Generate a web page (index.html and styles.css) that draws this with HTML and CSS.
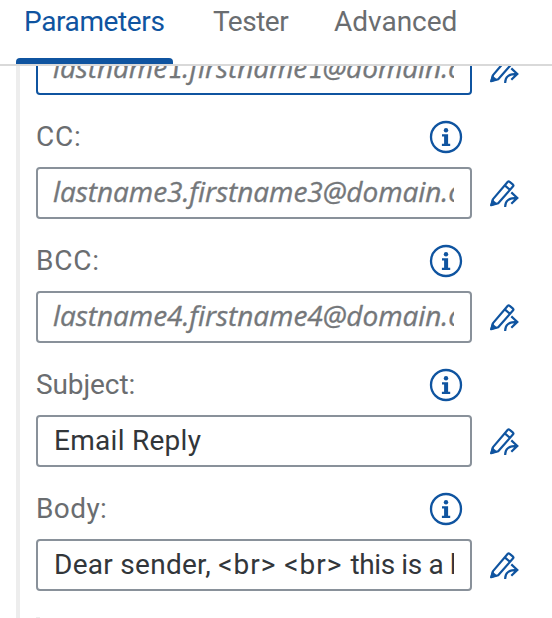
FILE: index.html
```html
<!DOCTYPE html>
<html lang="en">
<head>
<meta charset="utf-8">
<title>Parameters</title>
<link rel="stylesheet" href="styles.css">
</head>
<body>
<svg width="0" height="0" class="defs" aria-hidden="true">
  <symbol id="info" viewBox="0 0 34 34">
    <circle cx="17" cy="17" r="15" fill="none" stroke="currentColor" stroke-width="2.3"/>
    <circle cx="17" cy="10.3" r="2.2" fill="currentColor"/>
    <path d="M13 14.2h6.1v9.6h2.1v2.3h-8.3v-2.3h2.2v-7.3H13z" fill="currentColor"/>
  </symbol>
  <symbol id="edit" viewBox="0 0 30 30">
    <path d="M2.2 27.2 4 21.1 18.8 3.8q.8-.8 1.6-.1l3.6 3q.8.8.1 1.6L9.2 25.2zM15.8 7.4l5 4.3" fill="none" stroke="currentColor" stroke-width="2.2" stroke-linejoin="round"/>
    <path d="M1.1 28.3 3 21 8.7 25.9z" fill="currentColor"/>
    <path d="M16.2 29c-.2-5.9 3.2-9.1 12-9.1M22.3 14.4l6 5.5-6 5.8" fill="none" stroke="currentColor" stroke-width="2.2"/>
  </symbol>
</svg>
<nav class="tabs">
  <a class="tab active">Parameters</a>
  <a class="tab tester">Tester</a>
  <a class="tab advanced">Advanced</a>
</nav>
<main class="panel">
  <div class="form">
    <div class="row"><div class="input focused"><span class="value placeholder">lastname<span class="one">1</span>.firstname<span class="one">1</span>@domain.com</span></div><svg class="edit"><use href="#edit"/></svg></div>
    <div class="label"><span class="cc">CC:</span><svg class="info"><use href="#info"/></svg></div>
    <div class="row"><div class="input"><span class="value placeholder">lastname3.firstname3@domain.com</span></div><svg class="edit"><use href="#edit"/></svg></div>
    <div class="label"><span class="cc">BCC:</span><svg class="info"><use href="#info"/></svg></div>
    <div class="row"><div class="input"><span class="value placeholder">lastname4.firstname4@domain.com</span></div><svg class="edit"><use href="#edit"/></svg></div>
    <div class="label"><span class="subject">Subject:</span><svg class="info"><use href="#info"/></svg></div>
    <div class="row"><div class="input"><span class="value">Email Reply</span></div><svg class="edit"><use href="#edit"/></svg></div>
    <div class="label"><span class="body">Body:</span><svg class="info"><use href="#info"/></svg></div>
    <div class="row"><div class="input"><span class="value">Dear sender, <span class="markup">&lt;br&gt; &lt;br&gt; </span><span class="tight">this is a l</span></span></div><svg class="edit"><use href="#edit"/></svg></div>
    <div class="next"></div>
  </div>
</main>
</body>
</html>
```
FILE: styles.css
```css
* { box-sizing: border-box; }
body {
  margin: 0;
  height: 618px;
  overflow: hidden;
  background: #fff;
  color: #6a6d70;
  font: 28px/34px Roboto, "Liberation Sans", sans-serif;
}
.defs { display: none; }
.tabs {
  display: flex;
  height: 66px;
  padding-left: 16px;
  border-bottom: 2px solid #d9d9d9;
}
.tab { height: 64px; padding: 5px 8px 0; white-space: nowrap; }
.active {
  display: flex;
  flex-direction: column;
  justify-content: space-between;
  width: 157px;
  color: #0f54a0;
  letter-spacing: -.38px;
}
.active::after {
  content: "";
  height: 6px;
  margin: 0 -8px;
  border-radius: 4px 4px 0 0;
  background: #0f54a0;
}
.tester { margin-left: 31px; width: 90px; letter-spacing: -.5px; padding-left: 9px; }
.advanced { margin-left: 32px; }
.panel {
  height: 552px;
  margin-left: 16px;
  padding-left: 16px;
  border-left: 4px solid #ededed;
  overflow: hidden;
}
.form { margin-top: -23px; }
.row { display: flex; align-items: center; height: 52px; }
.input {
  width: 436px;
  height: 52px;
  padding: 7px 16px;
  border: 2px solid #89919a;
  border-radius: 4px;
  color: #32363a;
}
.focused { border-color: #0f54a0; }
.value {
  display: block;
  height: 38px;
  overflow: hidden;
  white-space: nowrap;
  letter-spacing: .28px;
}
.placeholder {
  margin-top: -2px;
  margin-left: -1px;
  color: #74777a;
  font-family: "Open Sans", "Noto Sans", sans-serif;
  font-style: italic;
  font-stretch: 90%;
  letter-spacing: -.06px;
  -webkit-text-stroke: .35px currentColor;
}
.one { font-family: Lato, sans-serif; letter-spacing: -1px; }
.markup { letter-spacing: 1.02px; }
.tight { letter-spacing: -.38px; }
.edit { width: 30px; height: 30px; margin-left: 17px; color: #0f54a0; }
.label {
  display: flex;
  align-items: center;
  justify-content: space-between;
  width: 427px;
  height: 72px;
  padding-top: 11px;
}
.cc { letter-spacing: .8px; }
.subject { letter-spacing: -.1px; }
.body { letter-spacing: .4px; }
.info { width: 34px; height: 34px; color: #0f54a0; }
.next { width: 4px; height: 2px; margin-top: 26px; background: #ededed; }
```
